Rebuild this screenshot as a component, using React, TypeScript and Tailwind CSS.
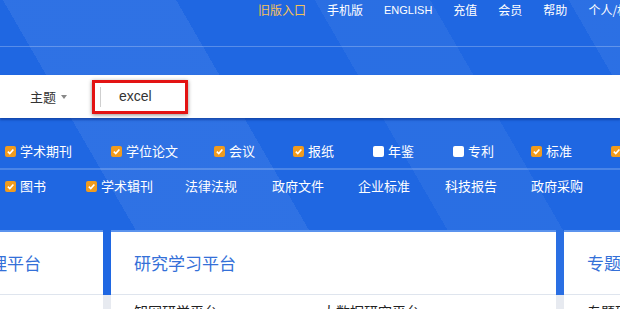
import React from "react"

const topLinks = ["旧版入口", "手机版", "ENGLISH", "充值", "会员", "帮助", "个人/机构馆"]

type Item = { label: string; w: number; box?: "on" | "off" }

const row1: Item[] = [
  { label: "学术期刊", w: 106, box: "on" },
  { label: "学位论文", w: 103, box: "on" },
  { label: "会议", w: 79, box: "on" },
  { label: "报纸", w: 80, box: "on" },
  { label: "年鉴", w: 80, box: "off" },
  { label: "专利", w: 78, box: "off" },
  { label: "标准", w: 80, box: "on" },
  { label: "成果", w: 80, box: "on" },
]

const row2: Item[] = [
  { label: "图书", w: 81, box: "on" },
  { label: "学术辑刊", w: 99, box: "on" },
  { label: "法律法规", w: 87 },
  { label: "政府文件", w: 86 },
  { label: "企业标准", w: 87 },
  { label: "科技报告", w: 86 },
  { label: "政府采购", w: 86 },
]

function Check({ on }: { on: boolean }) {
  if (!on) return <span className="w-[11px] h-[11px] rounded-[2px] bg-white shrink-0" />
  return (
    <span className="w-[11px] h-[11px] rounded-[2px] bg-[#f19b1d] shrink-0 flex items-center justify-center">
      <svg width="9" height="9" viewBox="0 0 10 10">
        <path d="M2 5.2 L4.2 7.3 L8.2 2.8" fill="none" stroke="#fff" strokeWidth="1.8" />
      </svg>
    </span>
  )
}

function Row({ items }: { items: Item[] }) {
  return (
    <div className="flex items-center h-[22px] pl-[5px] whitespace-nowrap">
      {items.map((it) => (
        <div key={it.label} className="flex items-center shrink-0 gap-[4px] text-[13px] text-white" style={{ width: it.w }}>
          {it.box && <Check on={it.box === "on"} />}
          <span>{it.label}</span>
        </div>
      ))}
    </div>
  )
}

function Card({ title, w, ml, items }: { title: string; w: number; ml?: number; items: string[] }) {
  return (
    <div className="bg-white shrink-0 border-t-2 border-[#5b93ee]" style={{ width: w, marginLeft: ml }}>
      <div className="h-[63px] flex items-center pl-[23px] border-b border-[#dfe5ee] text-[17px] text-[#3470d8] whitespace-nowrap">
        {title}
      </div>
      <div className="flex pl-[23px] pt-[8px] h-[30px] text-[14px] leading-[16px] text-[#222] whitespace-nowrap">
        {items.map((t) => (
          <div key={t} className="w-[188px]">{t}</div>
        ))}
      </div>
    </div>
  )
}

export default function App() {
  return (
    <div className="w-[620px] h-[309px] overflow-hidden bg-[#e7eaf0] font-['Noto_Sans_CJK_SC','Noto_Sans',sans-serif]">
      <div className="bg-[#1f67e2] bg-[linear-gradient(60deg,transparent_0,transparent_150px,rgba(255,255,255,0.07)_150px,rgba(255,255,255,0.07)_300px,transparent_300px,transparent_420px,rgba(255,255,255,0.05)_420px,rgba(255,255,255,0.05)_520px,transparent_520px,transparent_640px,rgba(255,255,255,0.06)_640px,rgba(255,255,255,0.06)_700px,transparent_700px)]">
        <div className="h-[46px] flex items-start pl-[258px] pt-[1px] gap-[21px] whitespace-nowrap text-[12px] leading-[18px] text-white">
          {topLinks.map((l, i) => (
            <span key={l} className={i === 0 ? "text-[#f5c15a]" : i === 2 ? "font-['Liberation_Sans',sans-serif] text-[11px]" : ""}>
              {l}
            </span>
          ))}
        </div>
        <div className="h-px bg-white/25" />
        <div className="h-[28px]" />

        <div className="h-[43px] bg-white flex items-center shadow-[0_2px_2px_rgba(10,50,140,0.6)]">
          <div className="flex items-center pl-[30px] w-[92px] text-[13px] text-[#333]">
            <span>主题</span>
            <span className="ml-[5px] w-0 h-0 border-l-[3.5px] border-r-[3.5px] border-t-[4px] border-l-transparent border-r-transparent border-t-[#888]" />
          </div>
          <div className="w-[96px] h-[34px] border-[3px] border-[#e31313] shadow-[0_1px_4px_rgba(0,0,0,0.45)] flex items-center pl-[5px]">
            <span className="w-px h-[20px] bg-[#cfcfcf]" />
            <span className="ml-[18px] text-[14px] text-[#333] font-['Liberation_Sans',sans-serif]">excel</span>
          </div>
        </div>

        <div className="pt-[22px] h-[50px]">
          <Row items={row1} />
        </div>
        <div className="h-[2px] bg-white/20" />
        <div className="pt-[5px] h-[60px]">
          <Row items={row2} />
        </div>
        <div className="h-[65px] -mb-[65px]" />
      </div>

      <div className="flex gap-[8px]">
        <Card title="知识管理平台" w={187} ml={-84} items={[]} />
        <Card title="研究学习平台" w={445} items={["知网研学平台", "大数据研究平台"]} />
        <Card title="专题知识库" w={200} items={["专题研究"]} />
      </div>
    </div>
  )
}
